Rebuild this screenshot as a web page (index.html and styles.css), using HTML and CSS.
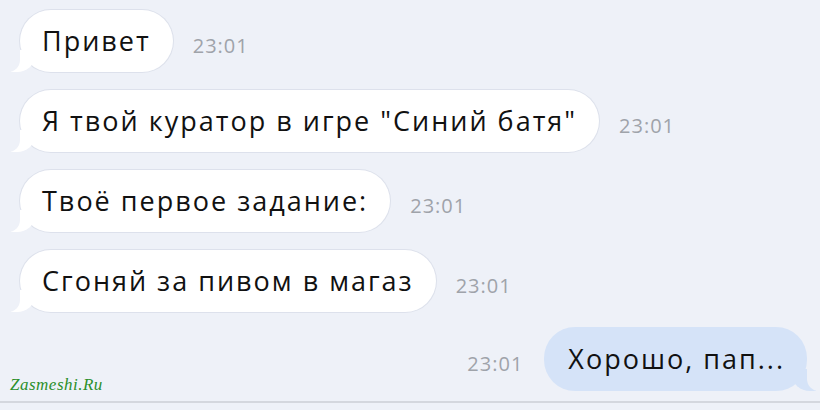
FILE: index.html
```html
<!DOCTYPE html>
<html lang="ru">
<head>
    <meta charset="UTF-8">
    <meta name="viewport" content="width=device-width, initial-scale=1.0">
    <title>Чат</title>
    <link rel="stylesheet" href="styles.css">
</head>
<body>
    <div class="chat">
        <div class="row in">
            <div class="bubble">Привет</div>
            <span class="time">23:01</span>
        </div>
        <div class="row in">
            <div class="bubble">Я твой куратор в игре "Синий батя"</div>
            <span class="time">23:01</span>
        </div>
        <div class="row in">
            <div class="bubble">Твоё первое задание:</div>
            <span class="time">23:01</span>
        </div>
        <div class="row in">
            <div class="bubble">Сгоняй за пивом в магаз</div>
            <span class="time">23:01</span>
        </div>
        <div class="row out">
            <span class="time">23:01</span>
            <div class="bubble">Хорошо, пап...</div>
        </div>
        <div class="watermark">Zasmeshi.Ru</div>
    </div>
</body>
</html>
```

FILE: styles.css
```css
body {
    margin: 0;
    background: #eef1f8;
    font-family: "Open Sans", "Liberation Sans", sans-serif;
    color: #111;
}

.chat {
    position: relative;
    height: 403px;
    box-sizing: border-box;
    padding: 10px 13px 0 20px;
    display: flex;
    flex-direction: column;
    gap: 18px;
    border-bottom: 2px solid #d4d7de;
}

.row {
    display: flex;
    align-items: center;
}

.row.out {
    justify-content: flex-end;
    margin-top: -3px;
}

.bubble {
    position: relative;
    background: #fff;
    border-radius: 31px;
    padding: 16px 22px;
    font-size: 27px;
    line-height: 30px;
    letter-spacing: 2px;
    box-shadow: 0 0 0 1px rgba(170, 180, 200, 0.25);
    white-space: nowrap;
}

.row.in .bubble::before,
.row.in .bubble::after,
.row.out .bubble::before,
.row.out .bubble::after {
    content: "";
    position: absolute;
    bottom: 0;
    height: 22px;
}

/* хвостик входящего сообщения */
.row.in .bubble::before {
    left: -9px;
    width: 24px;
    background: #fff;
    border-bottom-right-radius: 18px 16px;
}

.row.in .bubble::after {
    left: -14px;
    width: 14px;
    background: #eef1f8;
    border-bottom-right-radius: 12px;
}

.row.out .bubble {
    background: #d5e3f8;
    padding: 17px 22px 17px 24px;
    box-shadow: none;
}

/* хвостик исходящего сообщения */
.row.out .bubble::before {
    right: -9px;
    width: 24px;
    background: #d5e3f8;
    border-bottom-left-radius: 18px 16px;
}

.row.out .bubble::after {
    right: -14px;
    width: 14px;
    background: #eef1f8;
    border-bottom-left-radius: 12px;
}

.time {
    color: #9fa3aa;
    font-size: 20px;
    letter-spacing: 1px;
    margin-top: 8px;
}

.row.in .time {
    margin-left: 20px;
}

.row.out .time {
    margin-right: 21px;
}

.watermark {
    position: absolute;
    left: 10px;
    bottom: 6px;
    font-family: "Liberation Serif", serif;
    font-style: italic;
    font-size: 17px;
    letter-spacing: 0.5px;
    color: #2b8f2b;
}
```
